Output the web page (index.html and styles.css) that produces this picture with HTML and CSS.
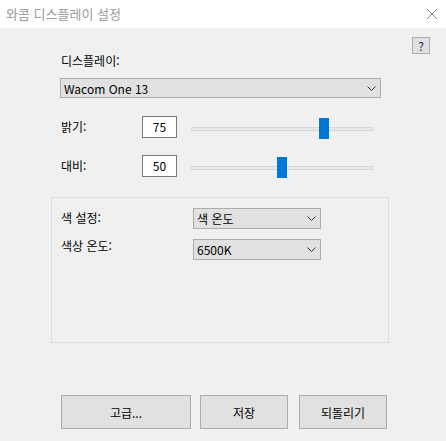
FILE: index.html
```html
<!DOCTYPE html>
<html lang="ko">
<head>
    <meta charset="UTF-8">
    <meta name="viewport" content="width=device-width, initial-scale=1.0">
    <title>와콤 디스플레이 설정</title>
    <link rel="stylesheet" href="styles.css">
</head>
<body>
    <div class="window">
        <div class="titlebar">
            <span class="title">와콤 디스플레이 설정</span>
            <svg class="close" width="12" height="12" viewBox="0 0 12 12">
                <path d="M1 1 L11 11 M11 1 L1 11" stroke="#8c8c8c" stroke-width="1" fill="none"/>
            </svg>
        </div>
        <div class="content">
            <div class="help-row">
                <button class="btn help-btn">?</button>
            </div>
            <div class="field-label">디스플레이:</div>
            <div class="select display-select">
                <span>Wacom One 13</span>
                <svg class="chevron" width="9" height="5" viewBox="0 0 9 5"><path d="M0.5 0.5 L4.5 4.5 L8.5 0.5" stroke="#333" fill="none"/></svg>
            </div>

            <div class="slider-row first">
                <div class="slider-label">밝기:</div>
                <div class="value-box">75</div>
                <div class="slider">
                    <div class="track"></div>
                    <div class="thumb" style="left: 128px;"></div>
                </div>
            </div>
            <div class="slider-row">
                <div class="slider-label">대비:</div>
                <div class="value-box">50</div>
                <div class="slider">
                    <div class="track"></div>
                    <div class="thumb" style="left: 86px;"></div>
                </div>
            </div>

            <div class="group">
                <div class="group-row">
                    <div class="group-label centered">색 설정:</div>
                    <div class="select small-select">
                        <span>색 온도</span>
                        <svg class="chevron" width="9" height="5" viewBox="0 0 9 5"><path d="M0.5 0.5 L4.5 4.5 L8.5 0.5" stroke="#333" fill="none"/></svg>
                    </div>
                </div>
                <div class="group-row second">
                    <div class="group-label">색상 온도:</div>
                    <div class="select small-select">
                        <span>6500K</span>
                        <svg class="chevron" width="9" height="5" viewBox="0 0 9 5"><path d="M0.5 0.5 L4.5 4.5 L8.5 0.5" stroke="#333" fill="none"/></svg>
                    </div>
                </div>
            </div>

            <div class="button-row">
                <button class="btn wide">고급...</button>
                <button class="btn">저장</button>
                <button class="btn revert">되돌리기</button>
            </div>
        </div>
    </div>
</body>
</html>
```

FILE: styles.css
```css
body {
    margin: 0;
    padding: 0;
    font-family: "Noto Sans CJK KR", sans-serif;
    font-size: 12px;
    color: #000;
    background-color: #f0f0f0;
}
.window {
    width: 446px;
    height: 441px;
    overflow: hidden;
    background: #f0f0f0;
}
.titlebar {
    height: 28px;
    background: #fff;
    display: flex;
    align-items: center;
    justify-content: space-between;
    padding: 0 8px 0 6px;
    box-sizing: border-box;
}
.title {
    font-size: 13px;
    color: #9a9a9a;
    line-height: 28px;
}
.close {
    margin-bottom: 1px;
}
.content {
    padding-top: 9px;
}
.help-row {
    display: flex;
    justify-content: flex-end;
    padding-right: 16px;
    height: 17px;
}
.btn {
    font-family: "Noto Sans CJK KR", sans-serif;
    font-size: 12px;
    color: #000;
    background: #e1e1e1;
    border: 1px solid #adadad;
    box-sizing: border-box;
    padding: 0;
    margin: 0;
    width: 88px;
    height: 34px;
}
.help-btn {
    width: 18px;
    height: 17px;
    line-height: 14px;
    color: #1a1a40;
}
.field-label {
    margin: -1px 0 0 61px;
    line-height: 16px;
}
.select {
    display: flex;
    align-items: center;
    justify-content: space-between;
    background: #e1e1e1;
    border: 1px solid #adadad;
    box-sizing: border-box;
    padding: 0 4px 0 3px;
}
.display-select {
    margin: 9px 0 0 60px;
    width: 321px;
    height: 20px;
}
.slider-row {
    display: flex;
    align-items: center;
    margin: 17px 0 0 61px;
    height: 22px;
}
.slider-row.first {
    margin-top: 18px;
}
.slider-label {
    width: 81px;
    line-height: 16px;
}
.value-box {
    width: 35px;
    height: 22px;
    box-sizing: border-box;
    border: 1px solid #7a7a7a;
    background: #fff;
    text-align: center;
    line-height: 20px;
}
.slider {
    position: relative;
    width: 182px;
    height: 22px;
    margin-left: 14px;
}
.track {
    position: absolute;
    left: 0;
    right: 0;
    top: 11px;
    height: 4px;
    box-sizing: border-box;
    border: 1px solid #d6d6d6;
    background: #e7e7e7;
}
.thumb {
    position: absolute;
    top: 2px;
    width: 10px;
    height: 21px;
    background: #0078d7;
}
.group {
    margin: 20px 0 0 51px;
    width: 338px;
    height: 146px;
    box-sizing: border-box;
    border: 1px solid #dcdcdc;
    padding: 10px 0 0 9px;
}
.group-row {
    display: flex;
    align-items: flex-start;
}
.group-row.second {
    margin-top: 10px;
}
.group-label {
    width: 132px;
    line-height: 16px;
    margin-top: -1px;
}
.group-label.centered {
    margin-top: 2px;
}
.small-select {
    width: 128px;
    height: 21px;
}
.button-row {
    display: flex;
    margin: 52px 0 0 61px;
    gap: 9px;
}
.btn.wide {
    width: 130px;
}
.btn.revert {
    margin-left: 2px;
}
```
